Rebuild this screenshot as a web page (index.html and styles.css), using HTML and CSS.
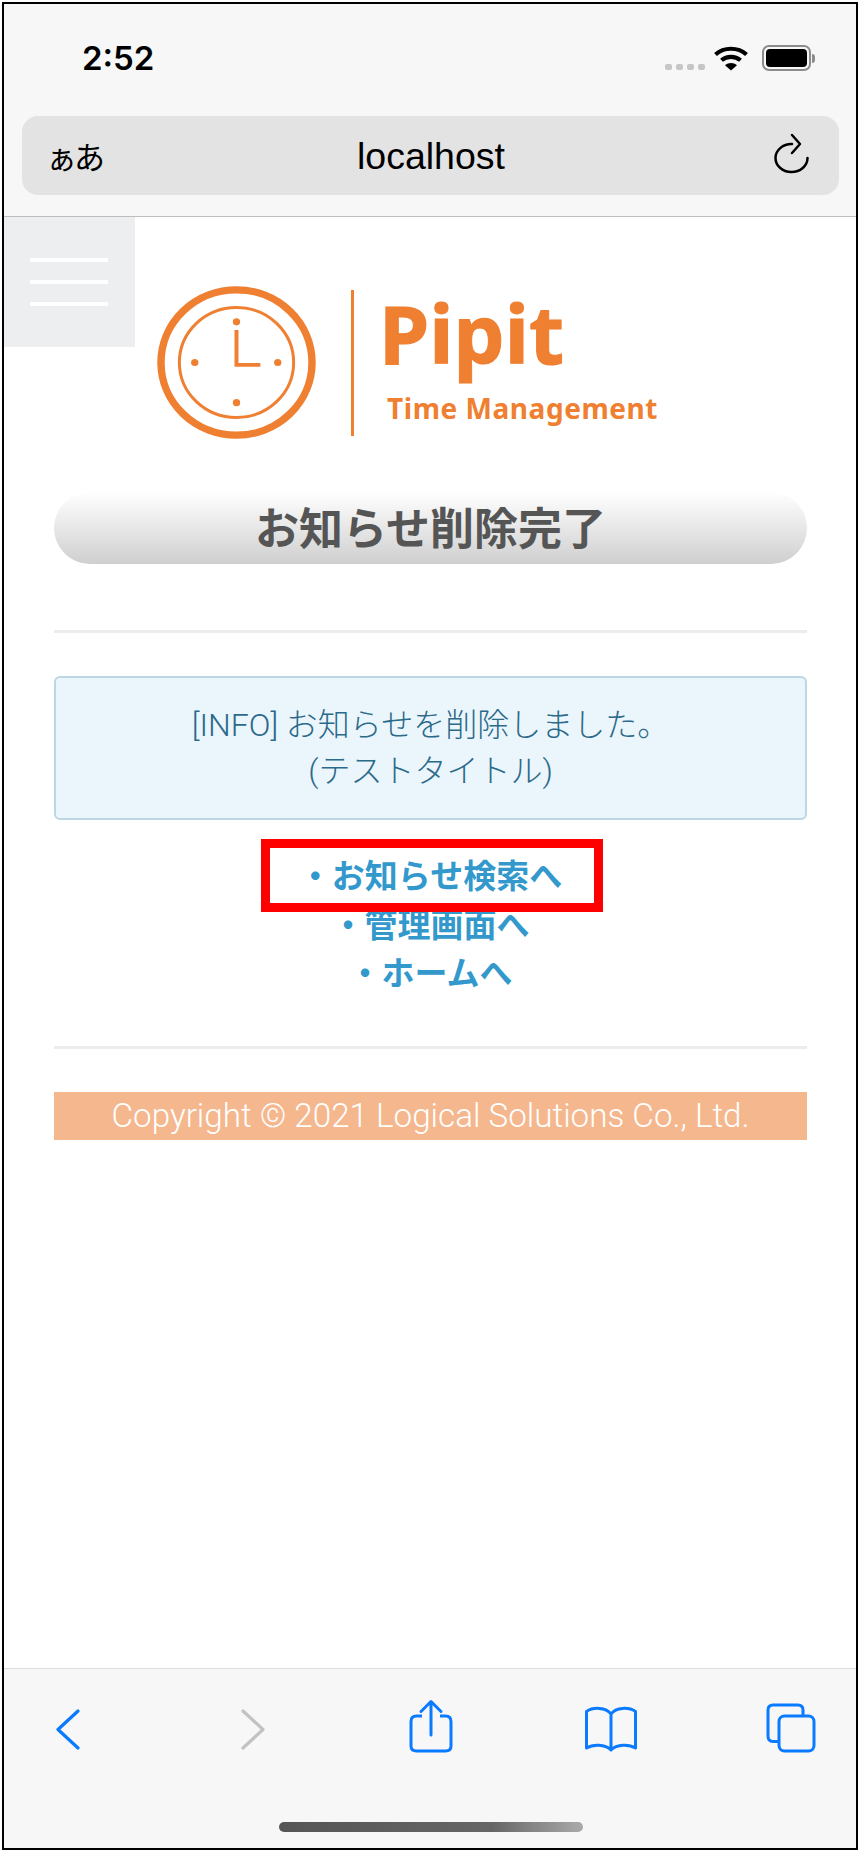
FILE: index.html
```html
<!DOCTYPE html>
<html lang="ja">
<head>
<meta charset="utf-8">
<title>お知らせ削除完了</title>
<link rel="stylesheet" href="styles.css">
</head>
<body>
<div class="device">
  <header class="chrome">
    <div class="status">
      <span class="time">2:52</span>
      <div class="status-icons">
        <div class="signal"><i></i><i></i><i></i><i></i></div>
        <svg class="wifi" width="36" height="26" viewBox="0 0 36 26">
          <path d="M2.5 9.5C11 1.8 25 1.8 33.5 9.5" fill="none" stroke="#000" stroke-width="4.2"/>
          <path d="M8.5 15.3C13.8 10.6 22.2 10.6 27.5 15.3" fill="none" stroke="#000" stroke-width="4.2"/>
          <path d="M12 20.2L18 25.5L24 20.2C20.5 17.2 15.5 17.2 12 20.2Z" fill="#000"/>
        </svg>
        <div class="battery"><div class="battery-fill"></div></div>
        <div class="battery-nub"></div>
      </div>
    </div>
    <div class="address">
      <span class="aa">ぁあ</span>
      <span class="url">localhost</span>
      <svg class="reload" width="36" height="42" viewBox="0 0 36 42">
        <path d="M19 12A16 14 0 1 0 34.500 26" fill="none" stroke="#000" stroke-width="2.500" stroke-linecap="round"/>
        <path d="M19 3L27 12L19 21" fill="none" stroke="#000" stroke-width="2.500" stroke-linecap="round" stroke-linejoin="round"/>
      </svg>
    </div>
  </header>

  <main class="page">
    <button class="menu" aria-label="menu"><i></i><i></i><i></i></button>
    <div class="logo">
      <svg class="clock" width="159" height="153" viewBox="0 0 160 160" preserveAspectRatio="none">
        <circle cx="80" cy="80" r="76" fill="none" stroke="#ef7f31" stroke-width="7.500"/>
        <circle cx="80" cy="80" r="57.500" fill="none" stroke="#ef7f31" stroke-width="3"/>
        <circle cx="80" cy="37.500" r="3.700" fill="#ef7f31"/>
        <circle cx="80" cy="122" r="3.700" fill="#ef7f31"/>
        <circle cx="38" cy="80" r="3.700" fill="#ef7f31"/>
        <circle cx="121.500" cy="80" r="3.700" fill="#ef7f31"/>
        <path d="M80 46V82.500H104" fill="none" stroke="#ef7f31" stroke-width="4"/>
      </svg>
      <div class="logo-sep"></div>
      <div class="logo-text">
        <div class="logo-name">Pipit</div>
        <div class="logo-sub">Time Management</div>
      </div>
    </div>
    <h1 class="title">お知らせ削除完了</h1>
    <hr class="rule rule-top">
    <div class="alert">[INFO] お知らせを削除しました。<br>(テストタイトル)</div>
    <ul class="links">
      <li><a href="#">・お知らせ検索へ</a></li>
      <li><a href="#">・管理画面へ</a></li>
      <li><a href="#">・ホームへ</a></li>
    </ul>
    <hr class="rule rule-bottom">
    <footer class="copyright">Copyright © 2021 Logical Solutions Co., Ltd.</footer>
  </main>

  <nav class="toolbar">
    <div class="tools">
      <svg width="26" height="42" viewBox="0 0 26 42"><path d="M23 3L3 21.500L23 40" fill="none" stroke="#0a7aff" stroke-width="3.200" stroke-linecap="round" stroke-linejoin="round"/></svg>
      <svg class="t-forward" width="26" height="42" viewBox="0 0 26 42"><path d="M3 3L23 21.500L3 40" fill="none" stroke="#c2c2c2" stroke-width="3.200" stroke-linecap="round" stroke-linejoin="round"/></svg>
      <svg class="t-share" width="44" height="54" viewBox="0 0 44 54">
        <path d="M13 17H7.500Q2 17 2 22.500V47Q2 52 7.500 52H36.500Q42 52 42 47V22.500Q42 17 36.500 17H31" fill="none" stroke="#0a7aff" stroke-width="3"/>
        <path d="M22 36V3M12 12.500L22 2.500L32 12.500" fill="none" stroke="#0a7aff" stroke-width="3" stroke-linecap="round" stroke-linejoin="round"/>
      </svg>
      <svg class="t-book" width="54" height="46" viewBox="0 0 54 46">
        <path d="M27 8C22 1 9 1 2.500 5.500V42C9 38 21 38 27 44C33 38 45 38 51.500 42V5.500C45 1 32 1 27 8V44" fill="none" stroke="#0a7aff" stroke-width="3" stroke-linejoin="round" stroke-linecap="round"/>
      </svg>
      <svg class="t-tabs" width="50" height="50" viewBox="0 0 50 50">
        <path d="M13 38.500H7Q2 38.500 2 33V7Q2 2 7 2H32Q37 2 37 7V13" fill="none" stroke="#0a7aff" stroke-width="3"/>
        <rect x="13" y="13" width="35" height="35" rx="5.500" fill="none" stroke="#0a7aff" stroke-width="3"/>
      </svg>
    </div>
    <div class="home-indicator"></div>
  </nav>

  <div class="annotation"></div>
</div>
</body>
</html>
```

FILE: styles.css
```css
* { box-sizing: border-box; }
html, body { margin: 0; padding: 0; background: #fff; }
body {
  width: 860px;
  height: 1852px;
  padding: 2px;
  font-family: "Liberation Sans", "Noto Sans CJK JP", sans-serif;
}
.device {
  position: relative;
  width: 856px;
  height: 1848px;
  border: 2px solid #000;
  display: flex;
  flex-direction: column;
  background: #fff;
  overflow: hidden;
}

/* browser chrome */
.chrome {
  height: 213px;
  flex: none;
  background: #f7f7f7;
  border-bottom: 1px solid #bdbdbd;
  padding: 0 17px 0 18px;
}
.status {
  height: 112px;
  display: flex;
  justify-content: space-between;
  padding: 36px 0 0 60px;
}
.time {
  font-family: "Inter", "Liberation Sans", sans-serif;
  font-size: 33px;
  font-weight: 600;
  line-height: 40px;
  margin-top: -2px;
  color: #000;
}
.status-icons {
  display: flex;
  align-items: flex-start;
  padding-top: 5px;
  margin-right: 24px;
}
.signal { display: flex; gap: 4px; margin-top: 19px; margin-right: 8px; }
.signal i { width: 7px; height: 6px; border-radius: 2px; background: #c6c6c6; }
.wifi { margin-right: 13px; }
.battery {
  width: 49px;
  height: 26px;
  border: 2px solid #8c8c8c;
  border-radius: 7px;
  padding: 2px;
}
.battery-fill { height: 100%; background: #000; border-radius: 4px; }
.battery-nub { width: 3px; height: 9px; margin-top: 9px; margin-left: 1px; background: #8c8c8c; border-radius: 0 3px 3px 0; }
.address {
  height: 79px;
  background: #e3e3e3;
  border-radius: 16px;
  display: flex;
  align-items: center;
  justify-content: space-between;
  padding: 0 30px 0 24px;
  position: relative;
}
.aa { font-family: "Noto Sans CJK JP", sans-serif; font-size: 31px; letter-spacing: -3px; color: #000; width: 43px; white-space: nowrap; }
.url {
  font-size: 37.500px;
  color: #000;
  line-height: 44px;
}
.reload { margin-top: -5px; }

/* page */
.page {
  position: relative;
  flex: 1;
  padding: 67px 49px 0 50px;
  background: #fff;
}
.menu {
  position: absolute;
  left: 0;
  top: 0;
  width: 131px;
  height: 130px;
  border: 0;
  padding: 41px 0 0 26px;
  background: #eceef0;
  display: flex;
  flex-direction: column;
  gap: 18px;
}
.menu i { display: block; width: 78px; height: 4px; background: #fff; }
.logo {
  display: flex;
  align-items: flex-start;
  padding-left: 103px;
  height: 160px;
}
.clock { flex: none; margin-top: 2px; }
.logo-sep { width: 3px; height: 146px; margin: 6px 0 0 35px; background: #ef7f31; flex: none; }
.logo-text { margin-left: 30px; color: #ef7f31; font-family: "Noto Sans", sans-serif; font-weight: 700; }
.logo-name { font-size: 81px; line-height: 80px; margin: 9px 0 0 -5px; -webkit-text-stroke: 1px #ef7f31; }
.logo-sub { font-size: 28px; line-height: 36px; margin: 17px 0 0 3px; letter-spacing: 0.55px; white-space: nowrap; }
.title {
  height: 72px;
  margin: 48px 0 0;
  border-radius: 36px;
  background: linear-gradient(#fff, #cfcfcf);
  color: #555;
  font-family: "Noto Sans CJK JP", sans-serif;
  font-size: 44px;
  font-weight: 700;
  line-height: 68px;
  text-align: center;
}
.rule { height: 3px; margin: 0; border: 0; background: #ececec; }
.rule-top { margin-top: 66px; }
.alert {
  margin-top: 43px;
  height: 144px;
  padding: 24px 0 0;
  background: #ebf6fc;
  border: 2px solid #bcd6e5;
  border-radius: 6px;
  color: #2b6a8a;
  font-family: "Roboto", "Noto Sans CJK JP", sans-serif;
  font-size: 32px;
  font-weight: 300;
  line-height: 46px;
  text-align: center;
}
.links {
  list-style: none;
  margin: 33px 0 0;
  padding: 0;
  text-align: center;
  font-size: 33px;
  font-weight: 700;
  line-height: 48.500px;
}
.links a { color: #3399cc; text-decoration: none; }
.rule-bottom { margin-top: 47px; }
.copyright {
  margin-top: 43px;
  height: 48px;
  background: #f5b78e;
  color: #fff;
  font-family: "Roboto", "Liberation Sans", sans-serif;
  font-size: 33.200px;
  font-weight: 300;
  line-height: 48px;
  text-align: center;
}

/* toolbar */
.toolbar {
  position: relative;
  flex: none;
  height: 180px;
  background: #f7f7f7;
  border-top: 1px solid #ddd;
}
.tools { display: flex; align-items: flex-start; padding: 32px 0 0 51px; }
.tools svg { flex: none; display: block; }
.t-forward { margin: 7px 0 0 159px; }
.tools svg:first-child { margin-top: 7px; }
.t-share { margin: -2px 0 0 143px; }
.t-book { margin: 5px 0 0 131px; }
.t-tabs { margin: 2px 0 0 128px; }
.home-indicator {
  position: absolute;
  left: 275px;
  bottom: 16px;
  width: 304px;
  height: 10px;
  border-radius: 5px;
  background: linear-gradient(90deg, #555, #666 70%, #aaa);
}

/* review annotation over the page */
.annotation {
  position: absolute;
  left: 257px;
  top: 835px;
  width: 342px;
  height: 73px;
  border: 9px solid #ff0000;
}
```
